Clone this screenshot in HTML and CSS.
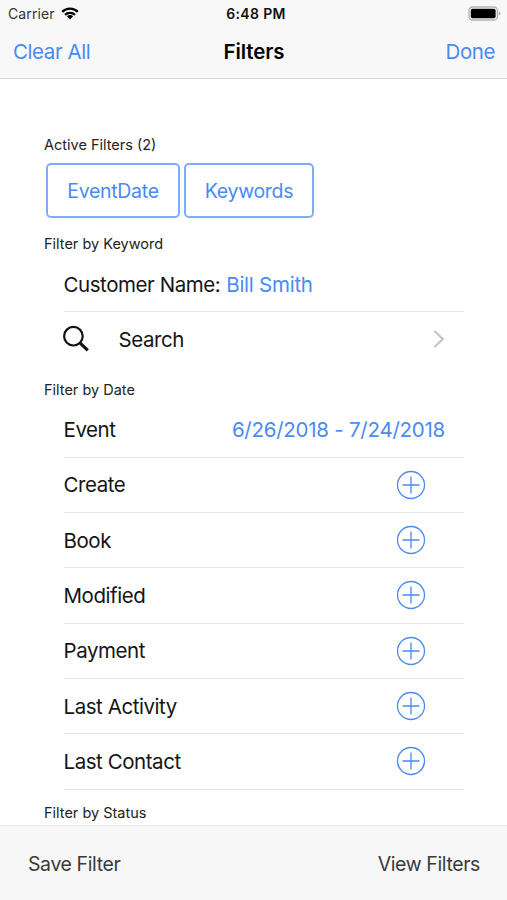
FILE: index.html
```
<!DOCTYPE html>
<html lang="en">
<head>
    <meta charset="UTF-8">
    <meta name="viewport" content="width=device-width, initial-scale=1.0">
    <title>Filters</title>
    <link rel="stylesheet" href="styles.css">
</head>
<body>
    <!-- Shared icons -->
    <svg class="sprite">
        <symbol id="plus" viewBox="0 0 30 30">
            <circle cx="15" cy="15" r="13.5"/>
            <path d="M6.5 15h17M15 6.5v17"/>
        </symbol>
    </svg>

    <div class="screen">
        <!-- Header -->
        <header class="header">
            <div class="status-bar">
                <div class="carrier">
                    <span class="carrier-name">Carrier</span>
                    <svg class="wifi" viewBox="0 0 18 13">
                        <path d="M1.2 4.9a11 11 0 0 1 15.6 0M4 7.9a7 7 0 0 1 10 0"/>
                        <path class="wifi-dot" d="M9 12.4L5.9 9.3a4.4 4.4 0 0 1 6.2 0z"/>
                    </svg>
                </div>
                <span class="time">6:48 PM</span>
                <svg class="battery" viewBox="0 0 33 15">
                    <rect class="battery-case" x="1" y="1" width="28.4" height="13" rx="3.6"/>
                    <rect x="2.8" y="2.8" width="24.8" height="9.4" rx="1.8"/>
                    <path class="battery-tip" d="M30.8 5.3q1.6.6 1.6 2.2t-1.6 2.2z"/>
                </svg>
            </div>
            <nav class="nav-bar">
                <a class="link clear">Clear All</a>
                <h1 class="title">Filters</h1>
                <a class="link done">Done</a>
            </nav>
        </header>

        <!-- Filter list -->
        <main class="content">
            <h2 class="heading heading-active">Active Filters (2)</h2>
            <div class="chips">
                <button class="chip chip-date">EventDate</button>
                <button class="chip chip-keyword">Keywords</button>
            </div>

            <h2 class="heading heading-keyword">Filter by Keyword</h2>
            <div class="row row-customer">
                <span class="label">Customer Name:</span>
                <span class="value name">Bill Smith</span>
            </div>
            <div class="row row-search">
                <svg class="search-icon" viewBox="0 0 28 28">
                    <circle cx="11.4" cy="11.2" r="9.3"/>
                    <path class="handle" d="M18.2 18.2l7.6 7.2"/>
                </svg>
                <span class="label search">Search</span>
                <svg class="chevron" viewBox="0 0 12 20">
                    <path d="M1.5 2l8.3 8-8.3 8"/>
                </svg>
            </div>

            <h2 class="heading heading-date">Filter by Date</h2>
            <div class="row">
                <span class="label">Event</span>
                <span class="value dates">6/26/2018 - 7/24/2018</span>
            </div>
            <div class="row">
                <span class="label">Create</span>
                <svg class="add"><use href="#plus"/></svg>
            </div>
            <div class="row">
                <span class="label">Book</span>
                <svg class="add"><use href="#plus"/></svg>
            </div>
            <div class="row">
                <span class="label">Modified</span>
                <svg class="add"><use href="#plus"/></svg>
            </div>
            <div class="row">
                <span class="label">Payment</span>
                <svg class="add"><use href="#plus"/></svg>
            </div>
            <div class="row">
                <span class="label">Last Activity</span>
                <svg class="add"><use href="#plus"/></svg>
            </div>
            <div class="row">
                <span class="label">Last Contact</span>
                <svg class="add"><use href="#plus"/></svg>
            </div>

            <h2 class="heading heading-status">Filter by Status</h2>
        </main>

        <!-- Footer -->
        <footer class="footer">
            <a class="save">Save Filter</a>
            <a class="view">View Filters</a>
        </footer>
    </div>
</body>
</html>
```
FILE: styles.css
```
* {
    box-sizing: border-box;
}

body {
    margin: 0;
    font-family: Inter, "Liberation Sans", sans-serif;
    background-color: #ffffff;
    color: #151515;
}

.sprite {
    display: none;
}

.screen {
    display: flex;
    flex-direction: column;
    height: 900px;
    overflow: hidden;
}

/* Header */
.header {
    flex: none;
    height: 79px;
    background-color: #f8f8f8;
    border-bottom: 1px solid #dcdcdc;
}

.status-bar {
    display: grid;
    grid-template-columns: 1fr auto 1fr;
    align-items: center;
    height: 27px;
    padding: 0 6px 0 8px;
    font-size: 14px;
}

.carrier {
    display: flex;
    align-items: center;
    gap: 6.5px;
    color: #333333;
}

.carrier-name {
    letter-spacing: 0.1px;
}

.wifi {
    width: 18px;
    height: 13px;
    fill: none;
    stroke: #000000;
    stroke-width: 2.3;
}

.wifi-dot {
    fill: #000000;
    stroke: none;
}

.time {
    padding-left: 3px;
    font-weight: 600;
    letter-spacing: 0.35px;
    color: #111111;
}

.battery {
    justify-self: end;
    width: 33px;
    height: 15px;
}

.battery-case {
    fill: none;
    stroke: #b2b2b2;
    stroke-width: 1.3;
}

.battery-tip {
    fill: #aaaaaa;
}

.nav-bar {
    display: grid;
    grid-template-columns: 1fr auto 1fr;
    align-items: center;
    height: 49px;
    padding: 0 12px 0 13px;
    font-size: 20.5px;
}

.link {
    color: #4a8af4;
    letter-spacing: -0.42px;
}

.done {
    justify-self: end;
}

.title {
    margin: 0;
    font-size: 20.5px;
    font-weight: 600;
    letter-spacing: -0.1px;
    color: #000000;
}

/* Filter list */
.content {
    flex: 1;
    min-height: 0;
    padding: 53px 43px 0 44px;
    overflow: hidden;
}

.heading {
    display: flex;
    align-items: center;
    height: 24px;
    margin: 0;
    font-size: 14.5px;
    font-weight: 400;
    color: #222222;
}

.chips {
    display: flex;
    gap: 4px;
    margin: 7px 0 0 2px;
}

.chip {
    height: 55px;
    padding: 0;
    border: 2px solid #7fabf7;
    border-radius: 5px;
    background-color: #ffffff;
    color: #4a8af4;
    font-family: inherit;
    font-size: 19.5px;
    letter-spacing: -0.3px;
}

.chip-date {
    width: 134px;
}

.chip-keyword {
    width: 130px;
}

.heading-keyword {
    margin-top: 13px;
}

.row {
    display: flex;
    align-items: center;
    height: 55.33px;
    margin-left: 20px;
    padding-right: 19px;
    border-bottom: 1px solid #e8e8e8;
    font-size: 20.5px;
    white-space: nowrap;
}

.label {
    margin-left: -0.5px;
    letter-spacing: -0.44px;
}

.row-customer {
    gap: 6px;
    height: 57px;
    padding-top: 3px;
}

.row-search {
    height: 54.33px;
    border-bottom: none;
}

.value {
    color: #4a8af4;
    letter-spacing: -0.25px;
}

.dates {
    margin-left: auto;
}

.search-icon {
    width: 28px;
    height: 28px;
    margin-left: -2px;
    fill: none;
    stroke: #111111;
    stroke-width: 2.2;
}

.handle {
    stroke-width: 3.2;
}

.search {
    margin-left: 28.5px;
}

.chevron {
    width: 12px;
    height: 20px;
    margin-left: auto;
    fill: none;
    stroke: #c4c4c6;
    stroke-width: 2.2;
}

.heading-date {
    height: 36px;
    padding-top: 10px;
}

.add {
    width: 30px;
    height: 30px;
    margin: 0 19px 0 auto;
    fill: none;
    stroke: #4a8af4;
    stroke-width: 1.3;
}

.heading-status {
    margin-top: 11px;
}

/* Footer */
.footer {
    display: flex;
    flex: none;
    align-items: center;
    justify-content: space-between;
    height: 75px;
    padding: 2px 27px 0 28px;
    border-top: 1px solid #e6e6e6;
    background-color: #f7f7f7;
    color: #3a3a3a;
    font-size: 19.5px;
    letter-spacing: -0.4px;
}
```
